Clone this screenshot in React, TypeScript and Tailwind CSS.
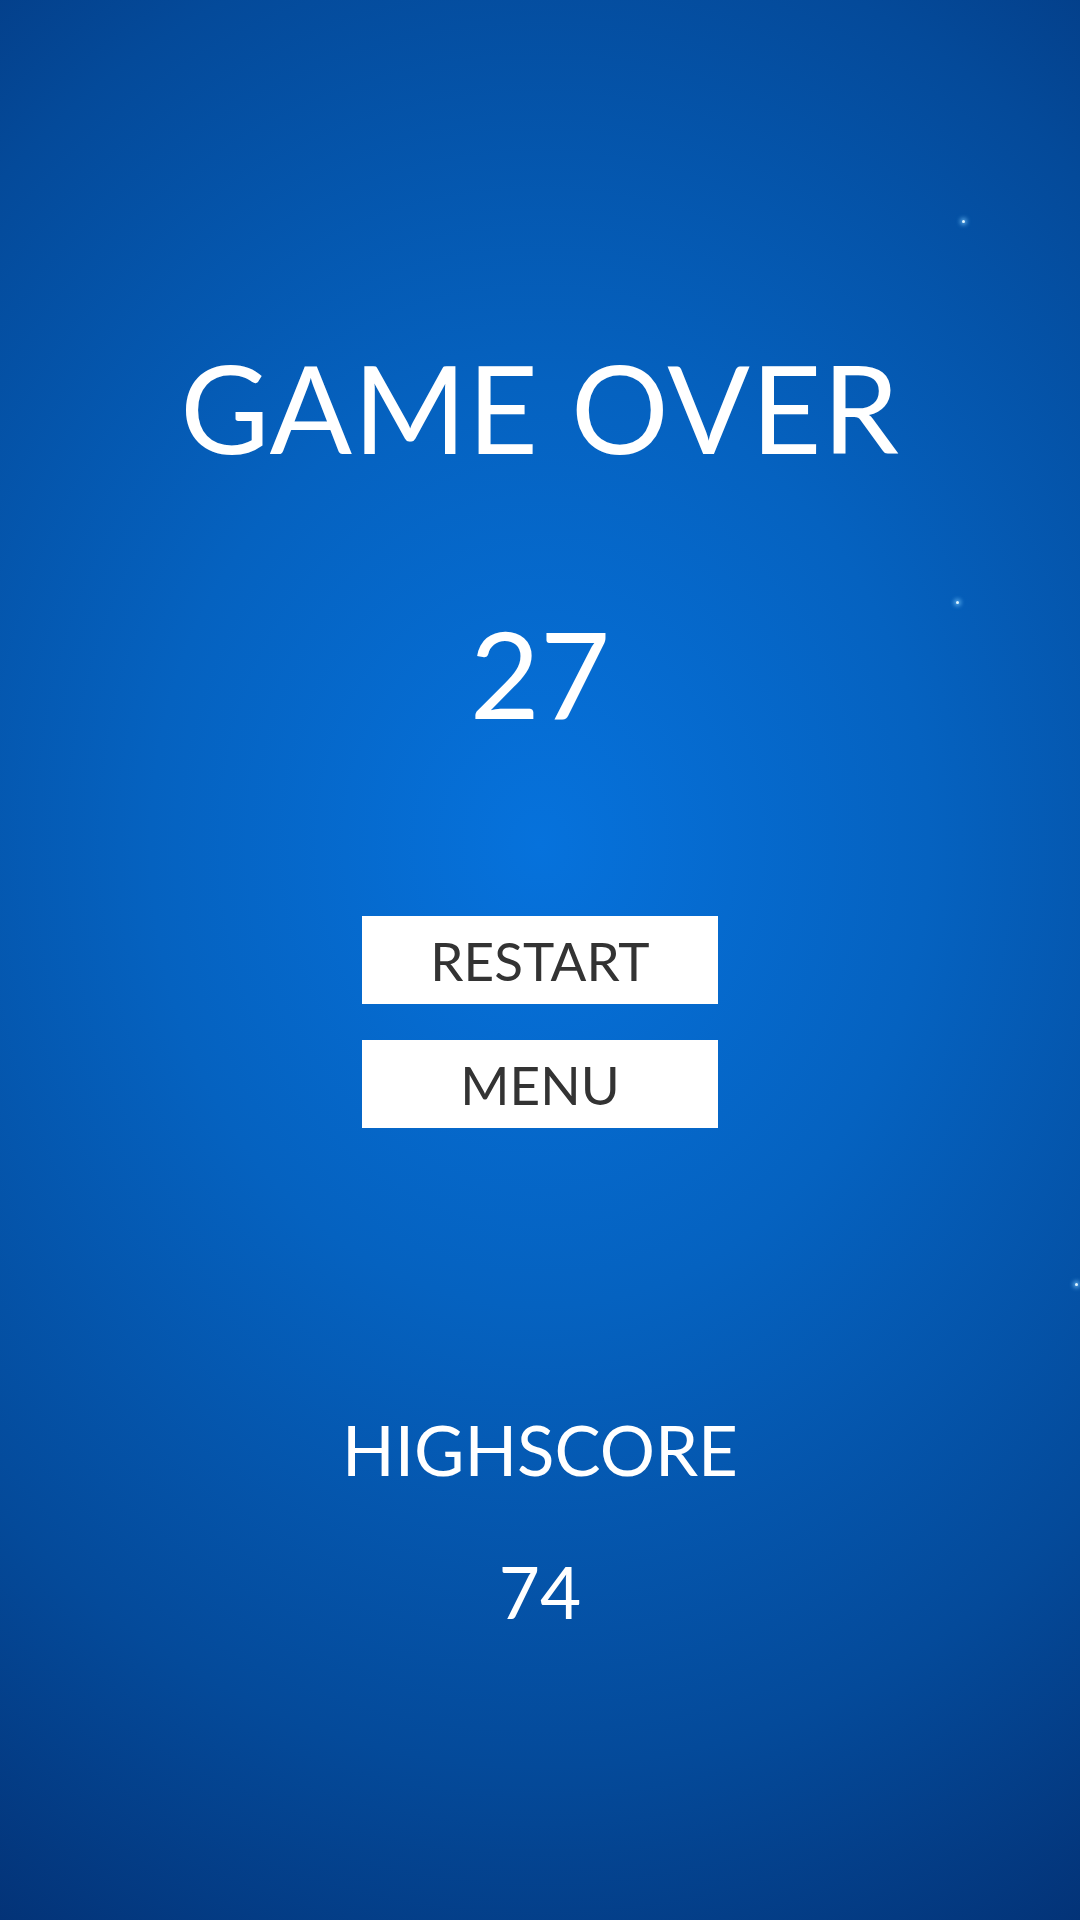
const STARS = [
  { x: 962, y: 220 },
  { x: 956, y: 601 },
  { x: 1075, y: 1283 },
];

function Star({ x, y }: { x: number; y: number }) {
  return (
    <span
      className="absolute h-[3px] w-[3px] rounded-full bg-[#dff4ff] shadow-[0_0_4px_2px_rgba(120,200,255,0.7)]"
      style={{ left: x, top: y }}
    />
  );
}

function MenuButton({ label }: { label: string }) {
  return (
    <button className="flex h-[88px] w-[356px] items-center justify-center bg-white text-[53px] font-normal leading-none text-[#333333]">
      {label}
    </button>
  );
}

export default function App() {
  return (
    <div
      className="relative flex h-[1920px] w-full flex-col items-center overflow-hidden bg-[radial-gradient(ellipse_90%_60%_at_50%_44%,#0672dc_0%,#0562c0_40%,#044a9a_80%,#032a6a_120%)] text-white"
      style={{ fontFamily: 'Lato, "Open Sans", sans-serif' }}
    >
      {STARS.map((s, i) => (
        <Star key={i} x={s.x} y={s.y} />
      ))}

      <h1 className="mt-[346px] text-[122px] font-normal leading-none tracking-[1px]">GAME OVER</h1>

      <div className="mt-[144px] text-[121px] font-normal leading-none">27</div>

      <div className="mt-[183px] flex flex-col gap-[36px]">
        <MenuButton label="RESTART" />
        <MenuButton label="MENU" />
      </div>

      <div className="mt-[287px] text-[69px] font-normal leading-none">HIGHSCORE</div>
      <div className="mt-[72px] text-[71px] font-normal leading-none">74</div>
    </div>
  );
}
